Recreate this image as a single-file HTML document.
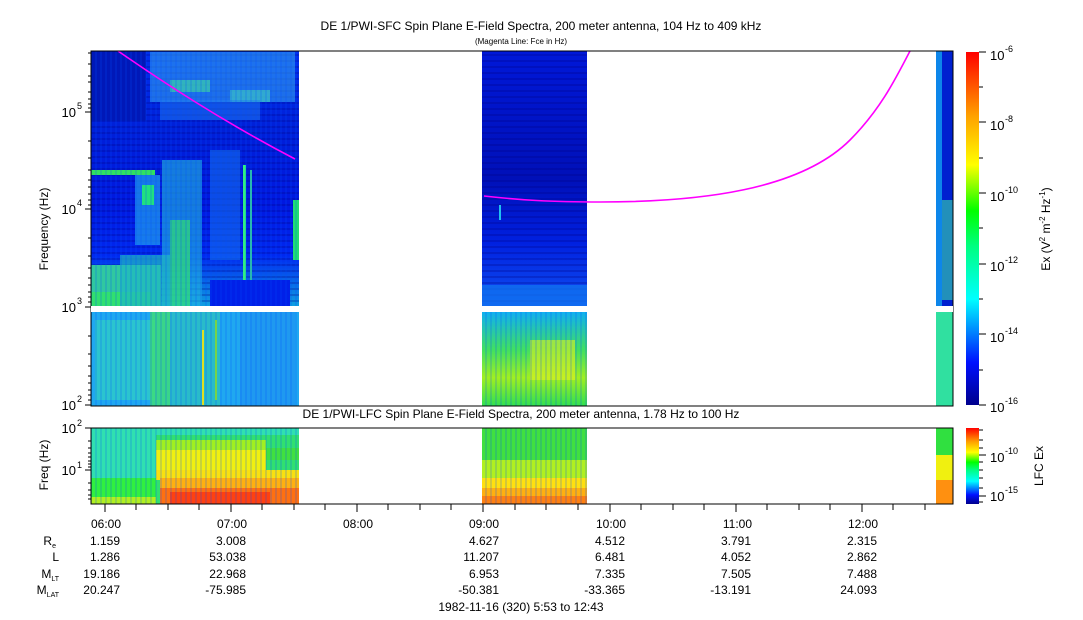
<!DOCTYPE html>
<html><head><meta charset="utf-8"><style>
body{margin:0;background:#fff;width:1083px;height:620px;overflow:hidden}
svg{display:block;font-family:"Liberation Sans",sans-serif}
</style></head><body>
<svg width="1083" height="620" viewBox="0 0 1083 620">
<defs>
<linearGradient id="cb" x1="0" y1="1" x2="0" y2="0">
<stop offset="0" stop-color="#00008c"/><stop offset="0.12" stop-color="#0010ff"/><stop offset="0.3" stop-color="#00ffff"/><stop offset="0.45" stop-color="#00ff80"/><stop offset="0.55" stop-color="#00ff00"/><stop offset="0.68" stop-color="#ffff00"/><stop offset="0.82" stop-color="#ffa000"/><stop offset="1" stop-color="#ff0000"/>
</linearGradient>
<linearGradient id="b1t" x1="0" y1="0" x2="0" y2="1">
<stop offset="0" stop-color="#0030f0"/><stop offset="0.3" stop-color="#0020d8"/><stop offset="0.6" stop-color="#0018e0"/><stop offset="0.8" stop-color="#0028f0"/><stop offset="1" stop-color="#10a0e0"/>
</linearGradient>
<linearGradient id="b2t" x1="0" y1="0" x2="0" y2="1">
<stop offset="0" stop-color="#0018d8"/><stop offset="0.5" stop-color="#0010b8"/><stop offset="0.75" stop-color="#0020e0"/><stop offset="1" stop-color="#1050f0"/>
</linearGradient>
<linearGradient id="b2l" x1="0" y1="0" x2="0" y2="1">
<stop offset="0" stop-color="#10b0f0"/><stop offset="0.4" stop-color="#40e060"/><stop offset="0.7" stop-color="#a0f020"/><stop offset="1" stop-color="#30e050"/>
</linearGradient>
<pattern id="hs" width="8" height="6" patternUnits="userSpaceOnUse"><rect width="8" height="2" fill="#000080" opacity="0.25"/></pattern>
<pattern id="vs" width="5" height="8" patternUnits="userSpaceOnUse"><rect width="2" height="8" fill="#0050ff" opacity="0.18"/></pattern>
</defs>

<text x="541" y="30" font-size="12" text-anchor="middle">DE 1/PWI-SFC  Spin Plane E-Field Spectra, 200 meter antenna, 104 Hz to 409 kHz</text>
<text x="521" y="44" font-size="8" text-anchor="middle">(Magenta Line: Fce in Hz)</text>

<!-- Block 1 top -->
<rect x="91" y="51" width="208" height="255" fill="url(#b1t)"/>
<rect x="91" y="51" width="208" height="255" fill="url(#hs)"/>
<rect x="91" y="51" width="55" height="70" fill="#0018b8"/>
<rect x="150" y="52" width="145" height="50" fill="#30a0f0" opacity="0.6"/>
<rect x="170" y="80" width="40" height="12" fill="#40e0a0" opacity="0.6"/>
<rect x="230" y="90" width="40" height="12" fill="#40d0c0" opacity="0.6"/>
<rect x="160" y="100" width="100" height="20" fill="#2080f0" opacity="0.5"/>
<rect x="91" y="170" width="64" height="5" fill="#30e060"/>
<rect x="135" y="175" width="25" height="70" fill="#20a0f0" opacity="0.7"/>
<rect x="142" y="185" width="12" height="20" fill="#20e080"/>
<rect x="162" y="160" width="40" height="146" fill="#20b0e0" opacity="0.65"/>
<rect x="170" y="220" width="20" height="86" fill="#30e070" opacity="0.7"/>
<rect x="210" y="150" width="30" height="110" fill="#1880f0" opacity="0.5"/>
<rect x="243" y="165" width="3" height="140" fill="#30f080"/>
<rect x="250" y="170" width="2" height="130" fill="#30d0a0"/>
<rect x="91" y="265" width="70" height="41" fill="#30c8a0"/>
<rect x="91" y="292" width="60" height="14" fill="#30e070"/>
<rect x="120" y="255" width="50" height="51" fill="#20b8c0" opacity="0.7"/>
<rect x="210" y="280" width="80" height="26" fill="#0020e8"/>
<rect x="293" y="200" width="6" height="60" fill="#20e070"/>
<rect x="91" y="51" width="208" height="255" fill="url(#vs)"/>
<!-- Block 1 low -->
<rect x="91" y="312" width="208" height="94" fill="#20a8f0"/>
<rect x="95" y="320" width="60" height="80" fill="#30d0c0" opacity="0.7"/>
<rect x="150" y="312" width="20" height="94" fill="#40e070" opacity="0.8"/>
<rect x="170" y="312" width="50" height="94" fill="#30c8b0" opacity="0.6"/>
<rect x="240" y="312" width="55" height="94" fill="#2090f0" opacity="0.6"/>
<rect x="202" y="330" width="2" height="75" fill="#e0e020"/>
<rect x="215" y="320" width="2" height="80" fill="#90f020"/>
<rect x="91" y="312" width="208" height="94" fill="url(#vs)"/>

<!-- Block 2 -->
<rect x="482" y="51" width="105" height="255" fill="url(#b2t)"/>
<rect x="482" y="51" width="105" height="255" fill="url(#hs)"/>
<rect x="482" y="285" width="105" height="21" fill="#1070f0" opacity="0.8"/>
<rect x="499" y="205" width="2" height="15" fill="#20c0f0"/>
<rect x="482" y="312" width="105" height="94" fill="url(#b2l)"/>
<rect x="530" y="340" width="45" height="40" fill="#e0f020" opacity="0.6"/>
<rect x="482" y="312" width="105" height="94" fill="url(#vs)"/>

<!-- Block 3 -->
<rect x="936" y="51" width="17" height="255" fill="#0020d0"/>
<rect x="936" y="51" width="6" height="255" fill="#10a0f0" opacity="0.8"/>
<rect x="942" y="200" width="11" height="100" fill="#30c0b0" opacity="0.7"/>
<rect x="936" y="312" width="17" height="94" fill="#30e0a0"/>

<!-- Fce line -->
<path d="M118,51 C160,80 220,120 295,159" stroke="#ff00ff" stroke-width="1.6" fill="none"/>
<path d="M484,196 C520,200 550,202 600,202 C700,202 800,190 850,140 C880,110 895,80 910,51" stroke="#ff00ff" stroke-width="1.6" fill="none"/>

<!-- Top frame -->
<path d="M91,51 H953 V406 H91 Z" stroke="#000" fill="none"/>
<rect x="91" y="306" width="208" height="6" fill="#fff"/>
<rect x="482" y="306" width="105" height="6" fill="#fff"/>
<rect x="936" y="306" width="17" height="6" fill="#fff"/>
<g stroke="#000">
<line x1="85" y1="112" x2="91" y2="112"/><line x1="85" y1="209" x2="91" y2="209"/><line x1="85" y1="307" x2="91" y2="307"/><line x1="85" y1="405" x2="91" y2="405"/>
<path d="M88,53H91M88,64H91M88,76H91M88,82H91M88,92H91M88,99H91M88,104H91M88,108H91M88,141H91M88,158H91M88,170H91M88,180H91M88,187H91M88,194H91M88,200H91M88,205H91M88,238H91M88,256H91M88,268H91M88,278H91M88,285H91M88,292H91M88,297H91M88,302H91M88,336H91M88,354H91M88,366H91M88,376H91M88,383H91M88,390H91M88,395H91M88,400H91"/>
</g>
<g font-size="13" text-anchor="end">
<text x="76" y="117">10</text><text x="76" y="214">10</text><text x="76" y="312">10</text><text x="76" y="410">10</text>
</g>
<g font-size="9"><text x="77" y="109">5</text><text x="77" y="206">4</text><text x="77" y="304">3</text><text x="77" y="402">2</text></g>
<text transform="translate(48,229) rotate(-90)" font-size="12" text-anchor="middle">Frequency (Hz)</text>

<!-- Colorbar top -->
<rect x="966" y="52" width="13" height="353" fill="url(#cb)"/>
<g stroke="#000"><path d="M979,52H986M979,87H983M979,122H986M979,158H983M979,193H986M979,228H983M979,264H986M979,299H983M979,334H986M979,370H983M979,405H986"/></g>
<g font-size="13"><text x="990" y="60">10</text><text x="990" y="130">10</text><text x="990" y="201">10</text><text x="990" y="271">10</text><text x="990" y="342">10</text><text x="990" y="412">10</text></g>
<g font-size="9"><text x="1005" y="52">-6</text><text x="1005" y="122">-8</text><text x="1005" y="193">-10</text><text x="1005" y="263">-12</text><text x="1005" y="334">-14</text><text x="1005" y="404">-16</text></g>
<text transform="translate(1050,229) rotate(-90)" font-size="12" text-anchor="middle">Ex (V<tspan font-size="8" dy="-5">2</tspan><tspan dy="5"> m</tspan><tspan font-size="8" dy="-5">-2</tspan><tspan dy="5"> Hz</tspan><tspan font-size="8" dy="-5">-1</tspan><tspan dy="5">)</tspan></text>

<!-- LFC -->
<text x="521" y="418" font-size="12" text-anchor="middle">DE 1/PWI-LFC  Spin Plane E-Field Spectra, 200 meter antenna, 1.78 Hz to 100 Hz</text>
<rect x="91" y="428" width="208" height="76" fill="#30e070"/>
<rect x="91" y="428" width="208" height="7" fill="#30e0b0"/>
<rect x="91" y="428" width="65" height="58" fill="#30e0b0"/>
<rect x="91" y="478" width="65" height="20" fill="#30f040"/>
<rect x="91" y="497" width="65" height="7" fill="#b0f020"/>
<rect x="156" y="440" width="110" height="10" fill="#a0f020"/>
<rect x="156" y="450" width="110" height="28" fill="#f0f010"/>
<rect x="156" y="470" width="143" height="10" fill="#f8e010"/>
<rect x="160" y="478" width="139" height="14" fill="#ffb010"/>
<rect x="160" y="488" width="139" height="16" fill="#ff7010"/>
<rect x="170" y="492" width="100" height="12" fill="#ff4010"/>
<rect x="266" y="448" width="33" height="12" fill="#40e040"/>
<rect x="91" y="428" width="208" height="76" fill="url(#vs)"/>
<rect x="482" y="428" width="105" height="76" fill="#40e040"/>
<rect x="482" y="460" width="105" height="20" fill="#b0f020"/>
<rect x="482" y="478" width="105" height="12" fill="#ffe010"/>
<rect x="482" y="488" width="105" height="16" fill="#ffb010"/>
<rect x="482" y="496" width="105" height="8" fill="#ff8010"/>
<rect x="482" y="428" width="105" height="76" fill="url(#vs)"/>
<rect x="936" y="428" width="17" height="76" fill="#30e040"/>
<rect x="936" y="455" width="17" height="25" fill="#f0f010"/>
<rect x="936" y="480" width="17" height="24" fill="#ff9010"/>
<path d="M91,428 H953 V504 H91 Z" stroke="#000" fill="none"/>
<g stroke="#000"><path d="M85,428H91M85,470H91M88,441H91M88,448H91M88,453H91M88,457H91M88,461H91M88,464H91M88,467H91M88,483H91M88,490H91M88,495H91M88,499H91"/></g>
<g font-size="13" text-anchor="end"><text x="76" y="433">10</text><text x="76" y="475">10</text></g>
<g font-size="9"><text x="77" y="426">2</text><text x="77" y="468">1</text></g>
<text transform="translate(48,465) rotate(-90)" font-size="12" text-anchor="middle">Freq (Hz)</text>
<rect x="966" y="428" width="13" height="76" fill="url(#cb)"/>
<g stroke="#000"><path d="M979,430H983M979,440H983M979,448H983M979,455H986M979,462H983M979,470H983M979,478H983M979,488H983M979,496H986M979,502H983"/></g>
<g font-size="13"><text x="990" y="462">10</text><text x="990" y="501">10</text></g>
<g font-size="9"><text x="1005" y="454">-10</text><text x="1005" y="493">-15</text></g>
<text transform="translate(1043,466) rotate(-90)" font-size="12" text-anchor="middle">LFC Ex</text>

<!-- time ticks -->
<g stroke="#000"><path d="M105,504V512M136,504V510M168,504V510M199,504V510M231,504V512M262,504V510M294,504V510M325,504V510M357,504V512M388,504V510M420,504V510M451,504V510M483,504V512M515,504V510M546,504V510M578,504V510M610,504V512M641,504V510M673,504V510M704,504V510M736,504V512M767,504V510M799,504V510M830,504V510M862,504V512M893,504V510M925,504V510"/></g>
<g font-size="12" text-anchor="end">
<text x="121" y="528">06:00</text><text x="247" y="528">07:00</text><text x="373" y="528">08:00</text><text x="499" y="528">09:00</text><text x="626" y="528">10:00</text><text x="752" y="528">11:00</text><text x="878" y="528">12:00</text>
<text x="120" y="545">1.159</text><text x="246" y="545">3.008</text><text x="499" y="545">4.627</text><text x="625" y="545">4.512</text><text x="751" y="545">3.791</text><text x="877" y="545">2.315</text>
<text x="120" y="561">1.286</text><text x="246" y="561">53.038</text><text x="499" y="561">11.207</text><text x="625" y="561">6.481</text><text x="751" y="561">4.052</text><text x="877" y="561">2.862</text>
<text x="120" y="578">19.186</text><text x="246" y="578">22.968</text><text x="499" y="578">6.953</text><text x="625" y="578">7.335</text><text x="751" y="578">7.505</text><text x="877" y="578">7.488</text>
<text x="120" y="594">20.247</text><text x="246" y="594">-75.985</text><text x="499" y="594">-50.381</text><text x="625" y="594">-33.365</text><text x="751" y="594">-13.191</text><text x="877" y="594">24.093</text>
<text x="56" y="545">R<tspan font-size="7" dy="3">e</tspan></text>
<text x="59" y="561">L</text>
<text x="59" y="578">M<tspan font-size="7" dy="3">LT</tspan></text>
<text x="59" y="594">M<tspan font-size="7" dy="3">LAT</tspan></text>
</g>
<text x="521" y="611" font-size="12" text-anchor="middle">1982-11-16 (320) 5:53 to 12:43</text>
</svg>
</body></html>
